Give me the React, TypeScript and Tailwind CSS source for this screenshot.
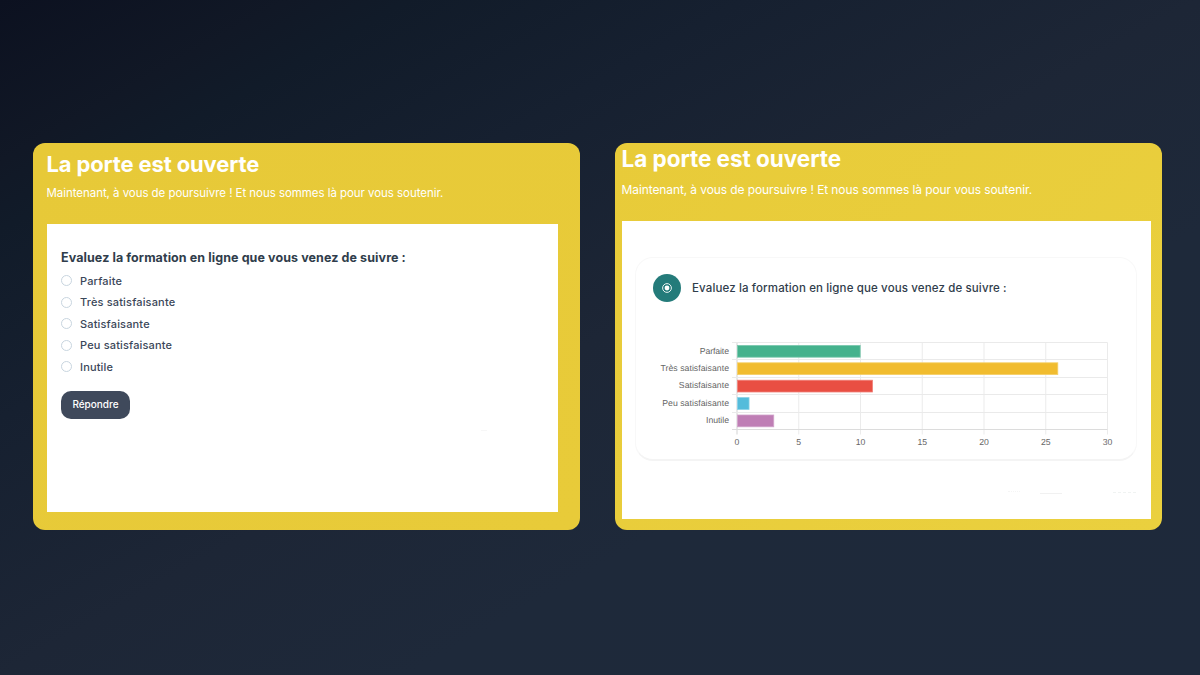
import React from "react";

const options = ["Parfaite", "Très satisfaisante", "Satisfaisante", "Peu satisfaisante", "Inutile"];

const results = [
  { label: "Parfaite", value: 10, fill: "#45b28d", edge: "#7cc9af", width: 29.3 },
  { label: "Très satisfaisante", value: 26, fill: "#f1bc2f", edge: "#f5cf68", width: 68.5 },
  { label: "Satisfaisante", value: 11, fill: "#e94f43", edge: "#f0837b", width: 50.2 },
  { label: "Peu satisfaisante", value: 1, fill: "#54bcdb", edge: "#88d0e6", width: 66.8 },
  { label: "Inutile", value: 3, fill: "#bf7eb5", edge: "#d1a3ca", width: 23 },
];

const ticks = [0, 5, 10, 15, 20, 25, 30];
const X0 = 101;
const UNIT = 12.35;
const Y0 = 8.5;
const ROW = 17.4;

function Chart() {
  return (
    <svg width="501" height="120" viewBox="0 0 501 120" className="block" fontFamily="'Liberation Sans', Arial, sans-serif" fontSize="8.7" fill="#666666" textRendering="geometricPrecision">
      {ticks.map((t) => (
        <g key={t}>
          <line x1={X0 + t * UNIT} x2={X0 + t * UNIT} y1={Y0} y2={Y0 + 5 * ROW + 5} stroke={t === 0 ? "#d3d3d3" : "#ebebeb"} />
          <text x={X0 + t * UNIT} y="111" textAnchor="middle">{t}</text>
        </g>
      ))}
      {[0, 1, 2, 3, 4, 5].map((i) => (
        <line key={i} x1={X0 - 5} x2={X0 + 30 * UNIT} y1={Math.floor(Y0 + i * ROW) + 0.5} y2={Math.floor(Y0 + i * ROW) + 0.5} stroke={i === 5 ? "#dcdcdc" : "#eaeaea"} />
      ))}
      {results.map((r, i) => (
        <g key={r.label}>
          <rect x={X0 + 0.5} y={Y0 + i * ROW + 2.9} width={r.value * UNIT - 0.8} height="11.8" fill={r.fill} stroke={r.edge} strokeWidth="0.8" />
          <text x="93" y={Y0 + i * ROW + 11.1} textAnchor="end" textLength={r.width}>{r.label}</text>
        </g>
      ))}
    </svg>
  );
}

export default function App() {
  return (
    <main className="flex h-[675px] w-[1200px] gap-[35px] overflow-hidden bg-[linear-gradient(to_bottom_right,#0c1120_0%,#111826_12%,#111b29_17%,#162030_31%,#1d2636_50%,#1e293a_67%,#1e293b_100%)] pt-[143px] pl-[33px] font-['Inter',sans-serif]">
      <section className="h-[387px] w-[547px] shrink-0 rounded-xl bg-[linear-gradient(135deg,#e7c938,#e8cb39)] pt-[7px] pl-[14px] text-white">
        <h1 className="-ml-[0.5px] h-7 text-[22px] leading-7 font-bold tracking-[-0.14px] whitespace-nowrap">La porte est ouverte</h1>
        <p className="-ml-[0.5px] mt-[5px] h-5 text-[11.5px] leading-5 tracking-[-0.05px] whitespace-nowrap">Maintenant, à vous de poursuivre ! Et nous sommes là pour vous soutenir.</p>
        <form className="mt-[21px] h-[288px] w-[511px] bg-white pt-[25px] pl-[14px] text-[#3b4759]">
          <h2 className="h-[18px] text-[12.5px] leading-[18px] font-bold tracking-[0.09px] whitespace-nowrap text-[#303d4b]">Evaluez la formation en ligne que vous venez de suivre :</h2>
          <div className="mt-[3px] flex flex-col">
            {options.map((o) => (
              <label key={o} className="flex h-[21.5px] items-center gap-[8px] text-[11px] font-medium tracking-[0.16px] whitespace-nowrap">
                <span className="size-[11px] shrink-0 rounded-full border border-[#c8d5df] bg-white" />
                <span>{o}</span>
              </label>
            ))}
          </div>
          <button type="button" className="mt-[13px] flex h-7 w-[69px] items-center justify-center rounded-[10px] bg-[#3f495b] text-[10px] font-medium text-white">Répondre</button>
          <div className="mt-[11px] ml-[420px] h-px w-[6px] bg-[#f7f7f7]" />
        </form>
      </section>

      <section className="h-[387px] w-[547px] shrink-0 rounded-xl bg-[linear-gradient(135deg,#e8cb39,#ead03e)] pt-[2px] pl-[7px] text-white">
        <h1 className="-ml-[0.5px] h-7 text-[22.5px] leading-7 font-bold tracking-[-0.04px] whitespace-nowrap">La porte est ouverte</h1>
        <p className="-ml-[0.5px] mt-[7px] h-5 text-[12px] leading-5 tracking-[-0.1px] whitespace-nowrap">Maintenant, à vous de poursuivre ! Et nous sommes là pour vous soutenir.</p>
        <div className="mt-[21px] h-[298px] w-[529px] bg-white pt-[36px] pl-[13px]">
          <article className="h-[204px] w-[502px] rounded-[18px] border border-[#f8f8f8] border-b-2 border-b-[#f4f4f4]">
            <header className="flex h-[59px] items-center gap-[11px] pl-[17px] text-[#303d4b]">
              <span className="flex size-7 items-center justify-center rounded-full bg-[#247b7a]">
                <svg width="10" height="10" viewBox="0 0 10 10" fill="none">
                  <circle cx="5" cy="5" r="4.4" stroke="white" strokeWidth="0.9" />
                  <circle cx="5" cy="5" r="2.4" fill="white" />
                </svg>
              </span>
              <h2 className="mt-[3px] text-[11.5px] font-medium tracking-[0.13px] whitespace-nowrap">Evaluez la formation en ligne que vous venez de suivre :</h2>
            </header>
            <div className="mt-[17px]">
              <Chart />
            </div>
          </article>
          <div className="mt-[30px] flex items-end pl-[373px]">
            <div className="mb-[2px] w-3 border-t border-dotted border-[#f5f5f5]" />
            <div className="ml-[20px] h-px w-[22px] bg-[#f1f1f1]" />
            <div className="mb-px ml-[51px] w-[23px] border-t border-dashed border-[#f0f3f2]" />
          </div>
        </div>
      </section>
    </main>
  );
}
